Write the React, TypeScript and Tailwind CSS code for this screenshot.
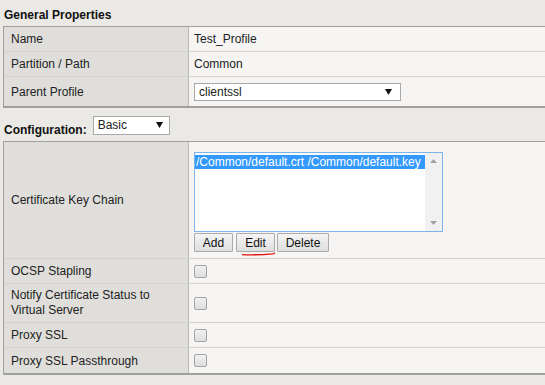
import React from "react";

function Row({
  label,
  h,
  last,
  children,
}: {
  label: React.ReactNode;
  h: string;
  last?: boolean;
  children?: React.ReactNode;
}) {
  return (
    <div className={`flex ${h} ${last ? "" : "border-b border-[#d2d2d0]"}`}>
      <div className="flex w-[185px] shrink-0 items-center border-r border-[#b9b9b7] bg-[#dfdedb] pl-[7px]">
        {label}
      </div>
      <div className="flex flex-1 items-center bg-[#f6f5f3] pl-[5px]">{children}</div>
    </div>
  );
}

function Arrow() {
  return (
    <svg width="7" height="6" viewBox="0 0 7 6" className="block">
      <polygon points="0,0 7,0 3.5,6" fill="#111" />
    </svg>
  );
}

function Checkbox() {
  return (
    <div className="h-[13px] w-[13px] rounded-[2px] border border-[#a3a3a3] bg-gradient-to-b from-[#f2f2f2] to-[#dedede]" />
  );
}

function Btn({ w, children }: { w: string; children: React.ReactNode }) {
  return (
    <div
      className={`flex h-[19px] ${w} items-center justify-center rounded-[1px] border border-[#ababab] bg-gradient-to-b from-[#f5f5f5] to-[#dedede] text-[12px] leading-[14px] text-[#111]`}
    >
      {children}
    </div>
  );
}

export default function App() {
  return (
    <div className="min-h-[385px] w-[545px] overflow-hidden bg-[#eae9e5] font-['Liberation_Sans',Arial,sans-serif] text-[12px] leading-[14px] text-[#222]">
      <div className="pb-[4px] pl-[4px] pt-[8px] font-bold text-[#111]">General Properties</div>

      <div className="ml-[3px] border-b-2 border-l border-t border-[#a0a0a0]">
        <Row label="Name" h="h-[25px]">
          Test_Profile
        </Row>
        <Row label="Partition / Path" h="h-[25px]">
          Common
        </Row>
        <Row label="Parent Profile" h="h-[29px]" last>
          <div className="flex h-[18px] w-[207px] items-center justify-between border border-[#a9a9a9] bg-white pl-[4px] pr-[8px]">
            <span>clientssl</span>
            <Arrow />
          </div>
        </Row>
      </div>

      <div className="flex items-end pb-[6px] pl-[4px] pt-[8px]">
        <span className="-mb-[2px] font-bold text-[#111]">Configuration:</span>
        <div className="ml-[6px] flex h-[19px] w-[77px] items-center justify-between border border-[#a9a9a9] bg-white pb-[2px] pl-[4px] pr-[6px]">
          <span>Basic</span>
          <Arrow />
        </div>
      </div>

      <div className="ml-[3px] border-b-2 border-l border-t border-[#a0a0a0]">
        <Row label="Certificate Key Chain" h="h-[117px]">
          <div className="flex h-full flex-col pt-[10px]">
            <div className="flex h-[80px] w-[249px] border border-[#7eb4ea] bg-white">
              <div className="flex-1 pt-[2px]">
                <div className="h-[14px] whitespace-nowrap bg-[#3399ff] pl-[1px] leading-[14px] text-white">
                  /Common/default.crt /Common/default.key
                </div>
              </div>
              <div className="flex w-[17px] flex-col items-center justify-between bg-[#f1f1f1] pb-[6px] pt-[6px]">
                <svg width="7" height="4" viewBox="0 0 7 4">
                  <polygon points="0,4 7,4 3.5,0" fill="#a3a3a3" />
                </svg>
                <svg width="7" height="4" viewBox="0 0 7 4">
                  <polygon points="0,0 7,0 3.5,4" fill="#a3a3a3" />
                </svg>
              </div>
            </div>
            <div className="mt-[1px] flex">
              <Btn w="w-[39px]">Add</Btn>
              <div className="relative ml-[3px]">
                <Btn w="w-[39px]">Edit</Btn>
                <svg
                  width="34"
                  height="4"
                  viewBox="0 0 34 4"
                  className="absolute left-[6px] top-[19px]"
                >
                  <path d="M0 2.6 Q16 3.2 31 1.8 L33 1" stroke="#e31010" strokeWidth="1.3" fill="none" />
                </svg>
              </div>
              <div className="ml-[2px]">
                <Btn w="w-[52px]">Delete</Btn>
              </div>
            </div>
          </div>
        </Row>
        <Row label="OCSP Stapling" h="h-[25px]">
          <Checkbox />
        </Row>
        <Row
          label={
            <span className="leading-[15px]">
              Notify Certificate Status to
              <br />
              Virtual Server
            </span>
          }
          h="h-[39px]"
        >
          <Checkbox />
        </Row>
        <Row label="Proxy SSL" h="h-[25px]">
          <Checkbox />
        </Row>
        <Row label="Proxy SSL Passthrough" h="h-[25px]" last>
          <Checkbox />
        </Row>
      </div>
    </div>
  );
}
